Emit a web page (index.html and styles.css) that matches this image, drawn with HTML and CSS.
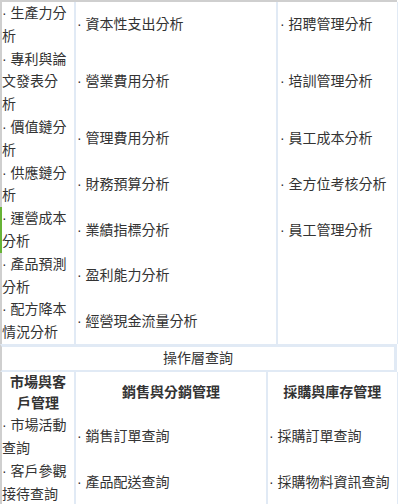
FILE: index.html
```html
<!DOCTYPE html>
<html lang="zh-Hant">
<head>
    <meta charset="UTF-8">
    <meta name="viewport" content="width=device-width, initial-scale=1.0">
    <title>分析查詢</title>
    <link rel="stylesheet" href="styles.css">
</head>
<body>
    <div class="board">
        <table class="grid top">
            <colgroup>
                <col class="c-side">
                <col class="c-mid">
                <col class="c-right">
            </colgroup>
            <tr><td class="side">· 生產力分析</td><td>· 資本性支出分析</td><td class="last">· 招聘管理分析</td></tr>
            <tr><td class="side">· 專利與論文發表分析</td><td>· 營業費用分析</td><td class="last">· 培訓管理分析</td></tr>
            <tr><td class="side">· 價值鏈分析</td><td>· 管理費用分析</td><td class="last">· 員工成本分析</td></tr>
            <tr><td class="side">· 供應鏈分析</td><td>· 財務預算分析</td><td class="last">· 全方位考核分析</td></tr>
            <tr><td class="side on">· 運營成本分析</td><td>· 業績指標分析</td><td class="last">· 員工管理分析</td></tr>
            <tr><td class="side">· 產品預測分析</td><td>· 盈利能力分析</td><td class="last"></td></tr>
            <tr><td class="side">· 配方降本情況分析</td><td>· 經營現金流量分析</td><td class="last"></td></tr>
        </table>

        <div class="band">操作層查詢</div>

        <table class="grid bottom">
            <colgroup>
                <col class="c-side">
                <col class="c-mid2">
                <col class="c-right2">
            </colgroup>
            <tr class="head">
                <th class="side">市場與客戶管理</th>
                <th>銷售與分銷管理</th>
                <th class="last">採購與庫存管理</th>
            </tr>
            <tr><td class="side">· 市場活動查詢</td><td>· 銷售訂單查詢</td><td class="last">· 採購訂單查詢</td></tr>
            <tr><td class="side">· 客戶參觀接待查詢</td><td>· 產品配送查詢</td><td class="last">· 採購物料資訊查詢</td></tr>
        </table>
    </div>
</body>
</html>
```

FILE: styles.css
```css
html, body {
    margin: 0;
    padding: 0;
    background: #fff;
}
body {
    font-family: "Liberation Sans", "Noto Sans CJK TC", sans-serif;
    font-size: 14px;
    color: #333;
}
.board {
    width: 397px;
    border-top: 2px solid #cfcfcf;
}
.grid {
    border-collapse: collapse;
    table-layout: fixed;
    width: 397px;
}
.grid td, .grid th {
    padding: 0 0 0 1px;
    vertical-align: middle;
    text-align: left;
    border-right: 2px solid #e1eaf5;
    line-height: 22.8px;
}
.grid .side {
    border-left: 2px solid #cfcfcf;
    padding: 0 4px 0 0;
}
.grid .side.on {
    border-left-color: #67b336;
}
.grid .last {
    border-right-width: 3px;
    padding-left: 2px;
}
.c-side { width: 74px; }
.c-mid { width: 202px; }
.c-right { width: 121px; }
.c-mid2 { width: 192px; }
.c-right2 { width: 131px; }

.band {
    border-top: 3px solid #e1eaf5;
    border-bottom: 2px solid #e1eaf5;
    border-left: 2px solid #cfcfcf;
    border-right: 3px solid #e1eaf5;
    line-height: 23px;
    text-align: center;
}
.bottom .last {
    padding-left: 1px;
}
.bottom .head th {
    font-weight: bold;
    text-align: center;
    line-height: 21px;
    padding: 0;
}
.bottom .head th.side {
    padding: 0 2px;
}
.bottom td {
    line-height: 23px;
}
```
